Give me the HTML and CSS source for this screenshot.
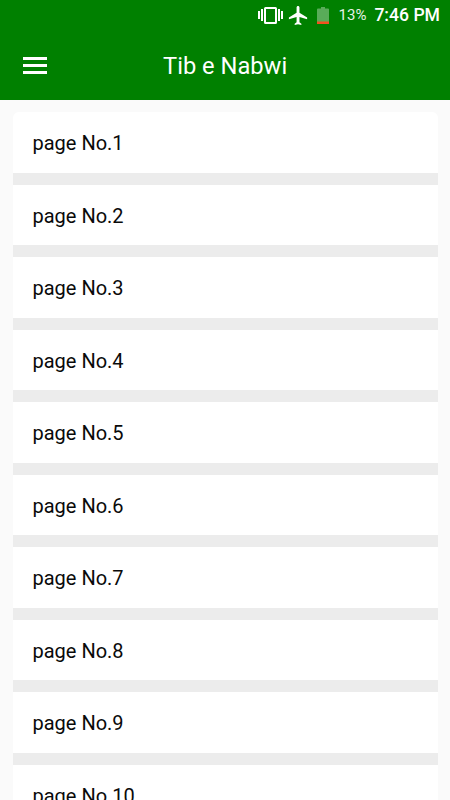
FILE: index.html
```html
<!DOCTYPE html>
<html lang="en">
<head>
<meta charset="utf-8">
<title>Tib e Nabwi</title>
<link rel="stylesheet" href="styles.css">
</head>
<body>
<header class="appbar">
  <div class="status">
    <svg class="ic-vib" viewBox="0 0 25 17" width="25" height="17"><path fill="#fff" fill-rule="evenodd" d="M0 4h2v8H0zM3 2h2v12H3zM20 2h2v12h-2zM23 4h2v8h-2zM7.500 0h10A1.500 1.500 0 0 1 19 1.500v14a1.500 1.500 0 0 1-1.500 1.500h-10A1.500 1.500 0 0 1 6 15.500v-14A1.500 1.500 0 0 1 7.500 0zM8 2v13h9V2z"/></svg>
    <svg class="ic-plane" viewBox="0 0 24 24" width="23" height="23"><path fill="#fff" d="M21 16v-2l-8-5V3.500c0-.83-.67-1.500-1.500-1.500S10 2.670 10 3.500V9l-8 5v2l8-2.500V19l-2 1.500V22l3.500-1 3.500 1v-1.500L13 19v-5.500l8 2.500z"/></svg>
    <svg class="ic-batt" viewBox="0 0 12 17" width="12" height="17"><path fill="#fff" fill-opacity=".35" d="M4 0h4v1.500h3a1 1 0 0 1 1 1V17H0V2.500a1 1 0 0 1 1-1h3z"/><rect y="14.500" width="12" height="2.500" fill="#f4511e"/></svg>
    <span class="pct">13%</span>
    <span class="time">7:46 PM</span>
  </div>
  <div class="toolbar">
    <svg class="menu" viewBox="0 0 24 17" width="24" height="17"><path fill="#fff" d="M0 0h24v3H0zM0 7h24v3H0zM0 14h24v3H0z"/></svg>
    <h1 class="title">Tib e Nabwi</h1>
  </div>
</header>
<main class="list">
  <div class="row"><span class="label">page No.1</span></div>
  <div class="row"><span class="label">page No.2</span></div>
  <div class="row"><span class="label">page No.3</span></div>
  <div class="row"><span class="label">page No.4</span></div>
  <div class="row"><span class="label">page No.5</span></div>
  <div class="row"><span class="label">page No.6</span></div>
  <div class="row"><span class="label">page No.7</span></div>
  <div class="row"><span class="label">page No.8</span></div>
  <div class="row"><span class="label">page No.9</span></div>
  <div class="row"><span class="label">page No.10</span></div>
</main>
</body>
</html>
```
FILE: styles.css
```css
html, body {
  margin: 0;
  height: 800px;
  overflow: hidden;
  background: #fafafa;
  font-family: Roboto, sans-serif;
}
.appbar {
  height: 100px;
  background: #008000;
  color: #fff;
  display: flex;
  flex-direction: column;
}
.status {
  height: 30px;
  display: flex;
  align-items: center;
  justify-content: flex-end;
  padding-right: 10px;
}
.ic-vib { margin-right: 4px; }
.ic-plane { margin-right: 7px; }
.ic-batt { margin-right: 10px; }
.pct { font-size: 15px; margin-right: 8px; color: #e6f1e6; }
.time { font-size: 17.600px; font-weight: 500; }
.toolbar {
  flex: 1;
  display: flex;
  align-items: center;
  padding-left: 23px;
}
.menu { margin-right: 116px; }
.title {
  margin: 0;
  padding-top: 2px;
  font-size: 23.700px;
  font-weight: 400;
}
.list {
  margin: 12px 12.500px 0;
  border-radius: 6px 6px 0 0;
  overflow: hidden;
}
.row {
  height: 72.500px;
  box-sizing: border-box;
  background: #fff;
  border-bottom: 12.500px solid #ececec;
  display: flex;
  align-items: center;
  padding-left: 20px;
  font-size: 20px;
  color: #0a0a0a;
}
.label { padding-top: 2px; }
```
